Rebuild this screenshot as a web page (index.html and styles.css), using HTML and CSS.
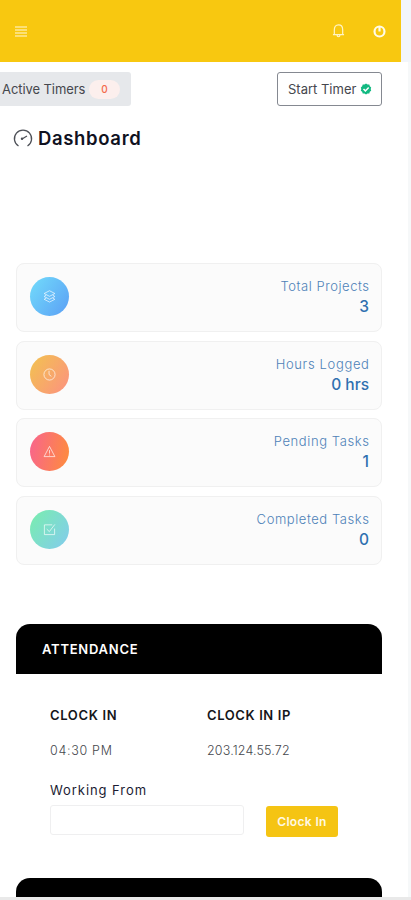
FILE: index.html
```html
<!DOCTYPE html>
<html lang="en">
<head>
<meta charset="utf-8">
<meta name="viewport" content="width=device-width, initial-scale=1">
<title>Dashboard</title>
<link rel="stylesheet" href="styles.css">
</head>
<body>
<div class="page">
  <header class="topbar">
    <svg class="menu" viewBox="0 0 12 11"><path d="M0 1h12M0 4h12M0 7h12M0 10h12"/></svg>
    <div class="actions">
      <svg class="bell" viewBox="0 0 14 15"><path d="M1 11.500h12M2.500 11V6.200C2.500 3 4.200 1 7 1s4.500 2 4.500 5.200V11M5.500 12.200c0 2 3 2 3 0"/></svg>
      <svg class="power" viewBox="0 0 12 12"><circle cx="6" cy="6" r="4.600"/><path d="M6 1.500v4.500"/></svg>
    </div>
  </header>
  <main>
    <div class="toolbar">
      <div class="timers"><span class="t-active">Active Timers</span><span class="badge">0</span></div>
      <button class="start"><span class="t-start">Start Timer</span><svg viewBox="0 0 12 12"><path class="seal" d="M6 .4l1.500 1 1.800.1.500 1.700 1.400 1.200L10.700 6l.5 1.700-1.400 1.100-.5 1.700-1.800.1L6 11.600l-1.500-1-1.800-.1-.5-1.700L.8 7.700 1.300 6 .8 4.400l1.400-1.200.5-1.700 1.800-.1z"/><path class="tick" d="M3.500 6l1.900 1.900 3.300-3.500"/></svg></button>
    </div>
    <h1><svg viewBox="0 0 20 20"><path d="M5.500 18A8.600 8.600 0 1 1 14.500 18M9 11l5-3"/><circle cx="9" cy="10.800" r=".6"/></svg><span class="t-dash">Dashboard</span></h1>
    <section class="stats">
      <article class="card">
        <span class="dot blue"><svg viewBox="0 0 14 14"><path d="M7 .8l5.800 3L7 6.800l-5.800-3zM3.500 5.500L1.200 7 7 10l5.800-3-2.300-1.500M3.500 8.800l-2.300 1.200L7 13l5.800-3-2.300-1.200"/></svg></span>
        <div class="info"><span class="label l1">Total Projects</span><strong>3</strong></div>
      </article>
      <article class="card">
        <span class="dot orange"><svg viewBox="0 0 14 14"><circle cx="7" cy="7" r="6"/><path d="M6.500 3v4l2.500 2"/></svg></span>
        <div class="info"><span class="label l2">Hours Logged</span><strong>0 hrs</strong></div>
      </article>
      <article class="card">
        <span class="dot red"><svg viewBox="0 0 14 14"><path d="M7 1.500l5.800 11H1.200zM7 5.500v3.800M7 10.300v1"/></svg></span>
        <div class="info"><span class="label l3">Pending Tasks</span><strong>1</strong></div>
      </article>
      <article class="card">
        <span class="dot green"><svg viewBox="0 0 14 14"><path d="M10 2H1.500v10.500h11V6M4 6.500l2.800 2.800L12.800 1.500"/></svg></span>
        <div class="info"><span class="label l4">Completed Tasks</span><strong>0</strong></div>
      </article>
    </section>
    <section class="attendance">
      <h2><span class="t-att">ATTENDANCE</span></h2>
      <div class="body">
        <dl>
          <div><dt class="t-in">CLOCK IN</dt><dd class="t-time">04:30 PM</dd></div>
          <div><dt class="t-inip">CLOCK IN IP</dt><dd class="t-ip">203.124.55.72</dd></div>
        </dl>
        <label for="from"><span class="t-from">Working From</span></label>
        <div class="form"><input id="from" type="text"><button class="clock"><span class="t-clock">Clock In</span></button></div>
      </div>
    </section>
    <section class="next"></section>
  </main>
</div>
</body>
</html>
```
FILE: styles.css
```css
* { box-sizing: border-box; }
body { margin: 0; background: #fff; font-family: Inter, "Liberation Sans", sans-serif; color: #45474d; }
.page { height: 900px; overflow: hidden; border-bottom: 3px solid #e9e9e9; background: linear-gradient(#f2f5fa, #f2f5fa) right top / 11px 62px no-repeat, linear-gradient(#f6f8f9, #f6f8f9) right top / 3px 900px no-repeat; }
svg { display: block; fill: none; stroke: currentColor; }
span, dt, dd { white-space: nowrap; }
button { font: inherit; margin: 0; padding: 0; }
.topbar { width: 401px; height: 62px; padding: 0 15px; background: #f8c810; color: #fff4c5; display: flex; align-items: center; justify-content: space-between; }
.menu { width: 12px; height: 11px; stroke-width: 1.500; opacity: .75; }
.actions { display: flex; align-items: center; gap: 28px; }
.bell { width: 13px; height: 14px; stroke-width: 1.300; }
.power { width: 13px; height: 13px; stroke-width: 2; color: #fffbe8; }
main { width: 382px; }
.toolbar { display: flex; align-items: flex-start; justify-content: space-between; padding-top: 10px; height: 54px; }
.timers { display: flex; align-items: center; width: 131px; height: 34px; padding-left: 2px; gap: 3px; background: #e6e8eb; border-radius: 0 3px 3px 0; font-size: 13px; line-height: 16px; }
.t-active { width: 84px; letter-spacing: -.08px; padding-bottom: 1px; }
.badge { width: 31px; height: 19px; border-radius: 10px; background: #fcefed; color: #f46a4b; font-size: 10px; font-weight: 500; line-height: 19px; text-align: center; }
.start { width: 105px; height: 34px; display: flex; align-items: center; padding-left: 10px; gap: 3px; background: #fff; border: 1px solid #858991; border-radius: 3px; color: #45474d; font-size: 13px; }
.t-start { width: 69px; text-align: left; padding-bottom: 1px; }
.start svg { width: 12px; height: 12px; }
.seal { fill: #12b981; stroke: none; }
.tick { stroke: #fff; stroke-width: 1.500; }
h1 { display: flex; align-items: center; gap: 5px; height: 24px; margin: 10px 0 0 13px; font-size: 18.500px; font-weight: 600; color: #10121f; }
h1 svg { width: 20px; height: 20px; stroke: #4d5057; stroke-width: 1.300; }
.t-dash { letter-spacing: .65px; }
.stats { padding: 113px 0 0 16px; display: grid; gap: 8.700px; }
.card { height: 69px; display: flex; justify-content: space-between; padding: 13px 12px 0 13px; border: 1px solid #f0f0f0; border-radius: 8px; background: #fbfbfb; }
.dot { width: 39px; height: 39px; border-radius: 50%; display: grid; place-items: center; color: rgba(255,255,255,.72); }
.dot svg { width: 13px; height: 13px; stroke-width: 1; }
.blue { background: linear-gradient(125deg, #72dcfb, #5b9ff5); }
.orange { background: linear-gradient(125deg, #f2c34f, #fc9181); }
.red { background: linear-gradient(100deg, #f8648e, #fe8d3b); }
.green { background: linear-gradient(125deg, #79eead, #83cbee); }
.info { display: flex; flex-direction: column; align-items: flex-end; margin-top: -1px; color: #2f70b0; }
.label { margin-right: -.6px; font-size: 13px; font-weight: 300; line-height: 20px; color: #4e82b8; }
.l1 { letter-spacing: .55px; }
.l2 { letter-spacing: .65px; }
.l3 { letter-spacing: .6px; }
.l4 { letter-spacing: .57px; }
strong { font-size: 15.500px; font-weight: 500; line-height: 21px; }
.attendance { margin: 59px 0 0 16px; }
h2 { margin: 0; height: 50px; padding-left: 26px; display: flex; align-items: center; border-radius: 14px 14px 0 0; background: #000; color: #fff; font-size: 13px; font-weight: 600; }
.t-att { letter-spacing: .75px; }
.body { height: 204px; padding: 31px 0 0 34px; }
dl { margin: 0; display: grid; grid-template-columns: 157px 1fr; }
dt { font-size: 13px; font-weight: 600; line-height: 20px; color: #15161a; }
dd { margin: 16px 0 0; font-size: 12.500px; font-weight: 300; line-height: 20px; }
.t-in { letter-spacing: .65px; }
.t-inip { letter-spacing: .6px; }
.t-time { letter-spacing: .7px; }
.t-ip { letter-spacing: .15px; }
label { display: block; margin-top: 20px; font-size: 13px; line-height: 19px; color: #1b1c33; }
.t-from { letter-spacing: .93px; }
.form { display: flex; gap: 22px; margin-top: 5px; align-items: flex-start; }
input { width: 194px; height: 30px; border: 1px solid #efeff0; border-radius: 3px; background: #fff; }
.clock { width: 72px; height: 31px; margin-top: 1px; border: 0; border-radius: 3px; background: #f5c413; color: #fff9e5; font-size: 12px; font-weight: 600; }
.t-clock { letter-spacing: .35px; }
.next { height: 30px; margin-left: 16px; border-radius: 14px 14px 0 0; background: #000; }
```
